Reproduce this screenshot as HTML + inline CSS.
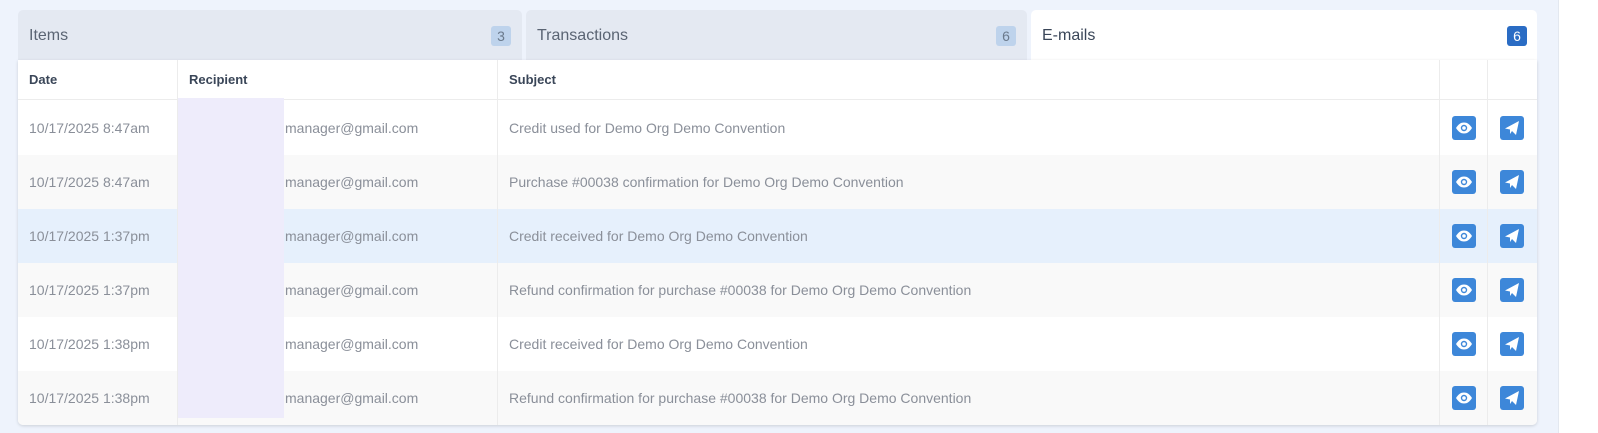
<!DOCTYPE html>
<html><head><meta charset="utf-8"><style>
*{box-sizing:border-box;margin:0;padding:0}
body{width:1598px;height:433px;background:#eef3fc;font-family:"Liberation Sans",sans-serif;position:relative;overflow:hidden}
.rp{position:absolute;left:1558px;top:0;width:40px;height:433px;background:#fff;border-left:1px solid #e3e8f0}
.tab{position:absolute;top:10px;height:50px;background:#e4e9f2;border-radius:5px 5px 0 0;font-size:16px;color:#5a6473}
.tab span.t{position:absolute;left:11px;top:17px}
.badge{position:absolute;top:16px;width:20px;height:20px;border-radius:3px;background:#bed3ec;color:#6b7a8c;font-size:14px;text-align:center;line-height:20px}
.card{position:absolute;left:18px;top:60px;width:1519px;height:365px;background:#fff;border-radius:0 0 5px 5px;box-shadow:0 1px 3px rgba(0,0,0,.15);overflow:hidden}
.row{position:absolute;left:0;width:1519px;font-size:14px;color:#8a8f99}
.row>div{position:absolute;top:0;height:100%;border-right:1px solid #ececec;display:flex;align-items:center;padding-left:11px}
.hd{font-size:13px;color:#3a4658;font-weight:bold}
.c1{left:0;width:160px}.c2{left:160px;width:320px}.c3{left:480px;width:942px}.c4{left:1422px;width:48px}.c5{left:1470px;width:49px;border-right:none!important}
.c2 span{padding-left:96px}
.ic{width:24px;height:24px;border-radius:3px;background:#3d87d9;margin-left:1px;display:block}
.blur{position:absolute;left:160px;top:38px;width:106px;height:320px;background:#eeecfb}
</style></head><body>
<div class="rp"></div>
<div class="tab" style="left:18px;width:504px"><span class="t">Items</span><span class="badge" style="left:473px">3</span></div>
<div class="tab" style="left:526px;width:501px"><span class="t">Transactions</span><span class="badge" style="left:470px">6</span></div>
<div class="tab" style="left:1031px;width:506px;background:#fff;color:#3a4658"><span class="t">E-mails</span><span class="badge" style="left:476px;background:#2a6cc4;color:#fff">6</span></div>
<div class="card">
<div class="row hd" style="top:0;height:40px;border-bottom:1px solid #ececec"><div class="c1">Date</div><div class="c2">Recipient</div><div class="c3">Subject</div><div class="c4"></div><div class="c5"></div></div>
<div class="row" style="top:40px;height:55px;background:#fff"><div class="c1">10/17/2025 8:47am</div><div class="c2"><span>manager@gmail.com</span></div><div class="c3">Credit used for Demo Org Demo Convention</div><div class="c4"><svg class="ic" viewBox="0 0 24 24"><path d="M4 12c2.5-4 5-5.5 8-5.5s5.5 1.5 8 5.5c-2.5 4-5 5.5-8 5.5S6.5 16 4 12z" fill="#fff"/><circle cx="12" cy="12" r="3.2" fill="#3d87d9"/><circle cx="12" cy="12" r="1.8" fill="#fff"/></svg></div><div class="c5"><svg class="ic" viewBox="0 0 24 24"><path d="M5 12.5L19 5l-3 14-4-4-2 3v-4.5z" fill="#fff"/></svg></div></div>
<div class="row" style="top:95px;height:54px;background:#f9f9f9"><div class="c1">10/17/2025 8:47am</div><div class="c2"><span>manager@gmail.com</span></div><div class="c3">Purchase #00038 confirmation for Demo Org Demo Convention</div><div class="c4"><svg class="ic" viewBox="0 0 24 24"><path d="M4 12c2.5-4 5-5.5 8-5.5s5.5 1.5 8 5.5c-2.5 4-5 5.5-8 5.5S6.5 16 4 12z" fill="#fff"/><circle cx="12" cy="12" r="3.2" fill="#3d87d9"/><circle cx="12" cy="12" r="1.8" fill="#fff"/></svg></div><div class="c5"><svg class="ic" viewBox="0 0 24 24"><path d="M5 12.5L19 5l-3 14-4-4-2 3v-4.5z" fill="#fff"/></svg></div></div>
<div class="row" style="top:149px;height:54px;background:#e6f0fc"><div class="c1">10/17/2025 1:37pm</div><div class="c2"><span>manager@gmail.com</span></div><div class="c3">Credit received for Demo Org Demo Convention</div><div class="c4"><svg class="ic" viewBox="0 0 24 24"><path d="M4 12c2.5-4 5-5.5 8-5.5s5.5 1.5 8 5.5c-2.5 4-5 5.5-8 5.5S6.5 16 4 12z" fill="#fff"/><circle cx="12" cy="12" r="3.2" fill="#3d87d9"/><circle cx="12" cy="12" r="1.8" fill="#fff"/></svg></div><div class="c5"><svg class="ic" viewBox="0 0 24 24"><path d="M5 12.5L19 5l-3 14-4-4-2 3v-4.5z" fill="#fff"/></svg></div></div>
<div class="row" style="top:203px;height:54px;background:#f9f9f9"><div class="c1">10/17/2025 1:37pm</div><div class="c2"><span>manager@gmail.com</span></div><div class="c3">Refund confirmation for purchase #00038 for Demo Org Demo Convention</div><div class="c4"><svg class="ic" viewBox="0 0 24 24"><path d="M4 12c2.5-4 5-5.5 8-5.5s5.5 1.5 8 5.5c-2.5 4-5 5.5-8 5.5S6.5 16 4 12z" fill="#fff"/><circle cx="12" cy="12" r="3.2" fill="#3d87d9"/><circle cx="12" cy="12" r="1.8" fill="#fff"/></svg></div><div class="c5"><svg class="ic" viewBox="0 0 24 24"><path d="M5 12.5L19 5l-3 14-4-4-2 3v-4.5z" fill="#fff"/></svg></div></div>
<div class="row" style="top:257px;height:54px;background:#fff"><div class="c1">10/17/2025 1:38pm</div><div class="c2"><span>manager@gmail.com</span></div><div class="c3">Credit received for Demo Org Demo Convention</div><div class="c4"><svg class="ic" viewBox="0 0 24 24"><path d="M4 12c2.5-4 5-5.5 8-5.5s5.5 1.5 8 5.5c-2.5 4-5 5.5-8 5.5S6.5 16 4 12z" fill="#fff"/><circle cx="12" cy="12" r="3.2" fill="#3d87d9"/><circle cx="12" cy="12" r="1.8" fill="#fff"/></svg></div><div class="c5"><svg class="ic" viewBox="0 0 24 24"><path d="M5 12.5L19 5l-3 14-4-4-2 3v-4.5z" fill="#fff"/></svg></div></div>
<div class="row" style="top:311px;height:54px;background:#f9f9f9"><div class="c1">10/17/2025 1:38pm</div><div class="c2"><span>manager@gmail.com</span></div><div class="c3">Refund confirmation for purchase #00038 for Demo Org Demo Convention</div><div class="c4"><svg class="ic" viewBox="0 0 24 24"><path d="M4 12c2.5-4 5-5.5 8-5.5s5.5 1.5 8 5.5c-2.5 4-5 5.5-8 5.5S6.5 16 4 12z" fill="#fff"/><circle cx="12" cy="12" r="3.2" fill="#3d87d9"/><circle cx="12" cy="12" r="1.8" fill="#fff"/></svg></div><div class="c5"><svg class="ic" viewBox="0 0 24 24"><path d="M5 12.5L19 5l-3 14-4-4-2 3v-4.5z" fill="#fff"/></svg></div></div>
<div class="blur"></div>
</div>
</body></html>
